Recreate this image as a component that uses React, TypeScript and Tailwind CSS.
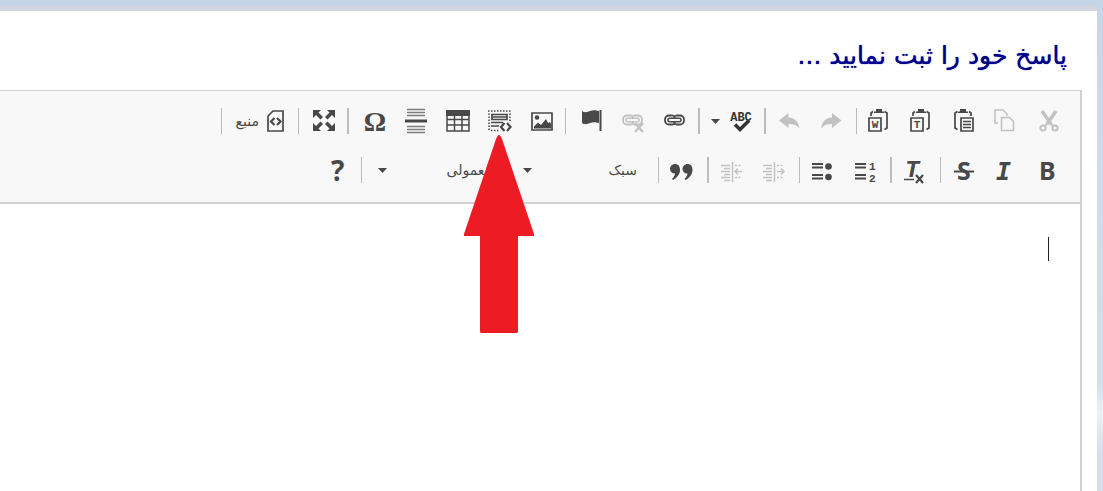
import type { ReactNode } from 'react'

type IconProps = {
    children: ReactNode
}

type ToolProps = {
    label: string
    disabled?: boolean
    children: ReactNode
}

function Icon({ children }: IconProps) {
    return (
        <svg
            width="24"
            height="24"
            viewBox="0 0 24 24"
            fill="none"
            stroke="#484848"
            strokeWidth="2"
            direction="ltr"
            className="shrink-0 overflow-visible"
            aria-hidden="true"
        >
            {children}
        </svg>
    )
}

function Tool({ label, disabled, children }: ToolProps) {
    return (
        <button
            type="button"
            title={label}
            aria-label={label}
            disabled={disabled}
            className={`flex h-12 w-[42px] shrink-0 items-center justify-center ${disabled ? 'opacity-30' : ''}`}
        >
            <Icon>{children}</Icon>
        </button>
    )
}

function Separator({ wide }: { wide?: boolean }) {
    return <span className={`mx-[3px] h-[26px] shrink-0 bg-[#bcbcbc] ${wide ? 'w-0.5' : 'w-px'}`} />
}

function Caret() {
    return (
        <svg width="9" height="5" viewBox="0 0 9 5" fill="#484848" className="shrink-0" aria-hidden="true">
            <path d="M0 0h9L4.500 5z" />
        </svg>
    )
}

function Combo({ label }: { label: string }) {
    return (
        <button
            type="button"
            aria-haspopup="listbox"
            className="flex h-12 w-[145px] shrink-0 items-center justify-between pr-[18px] pl-[13px] text-sm text-[#484848]"
        >
            <span>{label}</span>
            <Caret />
        </button>
    )
}

/* Clipboard with the page on the left (word / plain text) */
function PasteAs({ letter }: { letter: string }) {
    return (
        <>
            <path d="M5 4V2.500h2V0h6v2.500h2V4z" fill="#484848" stroke="none" />
            <path d="M2 7V4l2-1.500M15.500 2.500l2.500 1.500v15l-2.500 1.500" strokeWidth="1.700" />
            <path d="M0 9h12v13H0z" strokeWidth="1.700" />
            <text
                x="6"
                y="19"
                textAnchor="middle"
                fontSize="11"
                fontWeight="700"
                fontFamily="Liberation Mono, monospace"
                fill="#484848"
                stroke="none"
            >
                {letter}
            </text>
        </>
    )
}

function IndentLines() {
    return (
        <>
            <path d="M11.500 4v20" strokeWidth="1.500" />
            <path d="M0 7.500h9M3 10.500h6M0 13.500h9M3 16.500h6M0 19.500h9M3 22.500h6" strokeWidth="1.500" />
            <path d="M14 7.500h6M14 19.500h6" strokeWidth="1.500" strokeDasharray="2 1.500" />
        </>
    )
}

function ChainLinks() {
    return (
        <>
            <path d="M11 15.500H7a4 4 0 0 1-4-4v-1a4 4 0 0 1 4-4h4M14 6.500h4a4 4 0 0 1 4 4v1a4 4 0 0 1-4 4h-4" strokeWidth="1.800" />
            <path d="M11 6.500q2 .5 2 2.500M14 6.500q-2 .5-2 2.500M11 15.500q2-.5 2-2.500M14 15.500q-2-.5-2-2.500" strokeWidth="1.600" />
            <rect x="6" y="9.300" width="13" height="3.500" rx="1.500" strokeWidth="1.600" />
        </>
    )
}

export default function App() {
    return (
        <div
            dir="rtl"
            className="flex min-h-screen flex-col bg-linear-to-b from-[#c5d6e8] from-0% via-[#cddcec] via-30% to-[#d6dfea] to-100% font-['DejaVu_Sans','Noto_Sans',sans-serif]"
        >
            <div className="flex grow flex-col bg-[linear-gradient(to_bottom,transparent_78%,#eaf1f9_84%,#d6dfea_92%)] pt-1.5 pr-1.5">
                <main className="flex grow flex-col border-t-[5px] border-[#d2d5df] bg-white pr-[15px]">
                    <h1 className="pt-[27px] pr-[15px] pb-4 text-[25px] leading-9 font-medium text-[#00008b] text-shadow-[0_0_1px_#00008b]">
                        پاسخ خود را ثبت نمایید ...
                    </h1>

                    <section className="flex grow flex-col border-t border-r-2 border-[#d1d1d1]">
                        <div
                            role="toolbar"
                            className="flex flex-col gap-px border-b-2 border-[#d1d1d1] bg-[#f8f8f8] pt-1.5 pr-2.5 pb-2"
                        >
                            {/* First row */}
                            <div className="flex items-center">
                                <Tool label="برش" disabled>
                                    <path d="M5 2l9 13M19 2l-9 13" strokeWidth="3.500" />
                                    <circle cx="6" cy="19" r="2.600" />
                                    <circle cx="18" cy="19" r="2.600" />
                                    <path d="M8 17l4-4 4 4" />
                                </Tool>
                                <Tool label="کپی" disabled>
                                    <path d="M3 14H0V1h8l4 4v2" strokeWidth="1.500" />
                                    <path d="M6.500 8.500h8l4 4v9h-12z" strokeWidth="1.500" />
                                </Tool>
                                <Tool label="چسباندن">
                                    <path d="M5 4V2.500h2V0h6v2.500h2V4z" fill="#484848" stroke="none" />
                                    <path d="M4.500 2.500L2 4v15l2.500 1.500M16 2.500l2 1.500v3" strokeWidth="1.700" />
                                    <path d="M8 9h12v13H8z" strokeWidth="1.700" />
                                    <path d="M10 12.500h8M10 15.500h8M10 18.500h8" strokeWidth="1.500" />
                                </Tool>
                                <Tool label="چسباندن متن ساده">
                                    <PasteAs letter="T" />
                                </Tool>
                                <Tool label="چسباندن از Word">
                                    <PasteAs letter="W" />
                                </Tool>
                                <Separator />
                                <Tool label="بازچیدن" disabled>
                                    <path d="M21.500 11.500L12 4v4.500C5 9 2 13 1 19.500c3-3.500 6-4.500 11-4.500v4z" fill="#484848" stroke="none" />
                                </Tool>
                                <Tool label="واچیدن" disabled>
                                    <path d="M1 11.500L10.500 4v4.500c7 .5 10 4.500 11 11-3-3.500-6-4.500-11-4.500v4z" fill="#484848" stroke="none" />
                                </Tool>
                                <Separator wide />
                                <button
                                    type="button"
                                    aria-label="بررسی املا"
                                    className="flex h-12 w-[58px] shrink-0 items-center justify-between px-2"
                                >
                                    <Icon>
                                        <text
                                            x="12"
                                            y="12"
                                            textAnchor="middle"
                                            fontSize="12"
                                            fontWeight="700"
                                            fontFamily="Liberation Mono, monospace"
                                            fill="#333"
                                            stroke="none"
                                        >
                                            ABC
                                        </text>
                                        <path d="M6 15.500l5 5 9-9" stroke="#333" strokeWidth="3.500" />
                                    </Icon>
                                    <Caret />
                                </button>
                                <Separator wide />
                                <Tool label="پیوند">
                                    <ChainLinks />
                                </Tool>
                                <Tool label="برداشتن پیوند" disabled>
                                    <ChainLinks />
                                    <path d="M15 14l8 9M23 14l-8 9" strokeWidth="2.500" />
                                </Tool>
                                <Tool label="لنگر">
                                    <path d="M4 2c3 2 5 1 8 0s5-1 9 0v12c-3.500-1-6-1-9 0s-5 2-8 0z" fill="#484848" stroke="none" />
                                    <path d="M22.500 1v21" />
                                </Tool>
                                <Separator />
                                <Tool label="تصویر">
                                    <path d="M3 4h20v17H3z" strokeWidth="1.700" />
                                    <circle cx="8" cy="8.500" r="2.300" fill="#484848" stroke="none" />
                                    <path d="M5 19.500v-2l4-4 3 2.500 5-6 2 4 2-1 1 2v4.500z" fill="#484848" stroke="none" />
                                </Tool>
                                <div className="relative shrink-0">
                                    <Tool label="قاب کد">
                                        <path d="M1 2h23M2 4.500v18M23 4.500V13M4 21.500h9" strokeDasharray="1.500 1.500" strokeWidth="1.500" />
                                        <path d="M5 5.500h15v5H5zM5 8h15M4 13.500h12M4 17h8" strokeWidth="1.700" />
                                        <path d="M17.500 14l-3.500 4 3.500 4M20 14l3.500 4-3.500 4" strokeWidth="2.200" />
                                    </Tool>
                                    {/* Pointer to the embed button */}
                                    <svg
                                        width="70"
                                        height="198"
                                        viewBox="0 0 70 198"
                                        fill="#ed1c24"
                                        className="pointer-events-none absolute top-[38px] left-1/2 z-10 -translate-x-1/2"
                                        aria-hidden="true"
                                    >
                                        <path d="M33.500 1Q35 -1 36.500 1L38 4L70 99v2H54v96l-1 1H17l-1-1v-96H0v-2L32 4z" />
                                    </svg>
                                </div>
                                <Tool label="جدول">
                                    <path d="M2 2h22v20H2zM9.500 6v16M17 6v16M2 10.500h22M2 16h22" strokeWidth="1.500" />
                                    <path d="M1 1h24v6H1z" fill="#484848" stroke="none" />
                                </Tool>
                                <Tool label="خط افقی">
                                    <path d="M2 12h22" strokeWidth="3" />
                                    <path d="M4 .5h18M4 3.500h18M4 6.500h18M4 17.500h18M4 20.500h18M4 23.500h18" strokeWidth="1.500" opacity=".7" />
                                </Tool>
                                <Tool label="نویسه ویژه">
                                    <text
                                        x="14"
                                        y="22"
                                        textAnchor="middle"
                                        fontSize="28"
                                        fontWeight="700"
                                        fontFamily="Liberation Serif, serif"
                                        fill="#484848"
                                        stroke="none"
                                    >
                                        Ω
                                    </text>
                                </Tool>
                                <Separator wide />
                                <Tool label="بیشینه کردن">
                                    <path
                                        d="M2 1h8L7.500 3.500 12 8l-2.500 2.500L5 6 2 9zM24 1v8l-3-3-4.500 4.500L14 8l4.500-4.500L16 1zM2 22v-8l3 3 4.500-4.500L12 15l-4.500 4.500L10 22zM24 22h-8l2.500-2.500L14 15l2.500-2.500L21 17l3-3z"
                                        fill="#484848"
                                        stroke="none"
                                    />
                                </Tool>
                                <Separator />
                                <button
                                    type="button"
                                    className="flex h-12 w-[70px] shrink-0 items-center gap-1 px-2 text-sm text-[#484848]"
                                >
                                    <Icon>
                                        <path d="M5 7l5-5h10v20H5z" strokeWidth="1.700" />
                                        <path d="M11.500 9L8 12.500l3.500 3.500M14 9l3.500 3.500L14 16" strokeWidth="2.200" />
                                    </Icon>
                                    <span>منبع</span>
                                </button>
                                <Separator />
                            </div>

                            {/* Second row */}
                            <div className="flex items-center">
                                <Tool label="درشت">
                                    <text x="2" y="22" fontSize="25" fontWeight="700" fontFamily="Noto Sans, sans-serif" fill="#484848" stroke="none">
                                        B
                                    </text>
                                </Tool>
                                <Tool label="خمیده">
                                    <text
                                        x="1"
                                        y="22"
                                        fontSize="25"
                                        fontWeight="700"
                                        fontStyle="italic"
                                        fontFamily="DejaVu Sans Mono, monospace"
                                        fill="#484848"
                                        stroke="none"
                                    >
                                        I
                                    </text>
                                </Tool>
                                <Tool label="خط‌خورده">
                                    <text x="4" y="22" fontSize="25" fontWeight="700" fontFamily="Noto Sans, sans-serif" fill="#484848" stroke="none">
                                        S
                                    </text>
                                    <path d="M1 13.500h20" />
                                </Tool>
                                <Separator />
                                <Tool label="برداشتن قالب">
                                    <text
                                        x="1"
                                        y="19"
                                        fontSize="24"
                                        fontWeight="700"
                                        fontStyle="italic"
                                        fontFamily="Liberation Mono, monospace"
                                        fill="#484848"
                                        stroke="none"
                                    >
                                        T
                                    </text>
                                    <path d="M0 21.500h10" strokeWidth="1.500" />
                                    <path d="M12 17l7 8M19 17l-7 8" strokeWidth="2.200" />
                                </Tool>
                                <Separator wide />
                                <Tool label="فهرست شماره‌دار">
                                    <path d="M1 6h11M1 9.500h11M1 17h11M1 20.500h11" strokeWidth="1.800" />
                                    <g fontSize="11" fontWeight="700" fontFamily="Liberation Mono, monospace" fill="#484848" stroke="none">
                                        <text x="15" y="12">1</text>
                                        <text x="15" y="24">2</text>
                                    </g>
                                </Tool>
                                <Tool label="فهرست نقطه‌ای">
                                    <path d="M0 6h11M0 9.500h11M0 17h11M0 20.500h11" strokeWidth="1.800" />
                                    <circle cx="16.500" cy="8.500" r="3.300" fill="#484848" stroke="none" />
                                    <circle cx="16.500" cy="19" r="3.300" fill="#484848" stroke="none" />
                                </Tool>
                                <Separator />
                                <Tool label="افزایش تورفتگی" disabled>
                                    <IndentLines />
                                    <path d="M14 13.500h7M18 10.500l3 3-3 3" strokeWidth="1.500" />
                                </Tool>
                                <Tool label="کاهش تورفتگی" disabled>
                                    <IndentLines />
                                    <path d="M21 13.500h-7M17 10.500l-3 3 3 3" strokeWidth="1.500" />
                                </Tool>
                                <Separator wide />
                                <Tool label="نقل قول">
                                    <path
                                        d="M4 6c3 0 5 2 5 6s-3 8-7 10l-1-1c2-2 3-4 3-5.500C1 15.500-1 13.500-1 11s2-5 5-5zM16.500 6c3 0 5 2 5 6s-3 8-7 10l-1-1c2-2 3-4 3-5.500-3 0-5-2-5-4.500s2-5 5-5z"
                                        fill="#484848"
                                        stroke="none"
                                    />
                                </Tool>
                                <Separator />
                                <Combo label="سبک" />
                                <Combo label="معمولی" />
                                <Separator />
                                <Tool label="راهنما">
                                    <text x="6" y="23" fontSize="28" fontWeight="700" fontFamily="Noto Sans, sans-serif" fill="#484848" stroke="none">
                                        ?
                                    </text>
                                </Tool>
                            </div>
                        </div>

                        {/* Writing area */}
                        <div className="relative flex grow">
                            <textarea
                                aria-label="متن پاسخ"
                                className="min-h-60 grow resize-none bg-white px-[31px] py-[33px] text-base outline-none"
                            />
                            <span className="absolute top-[33px] right-[31px] h-6 w-px bg-[#202124]" />
                        </div>
                    </section>
                </main>
            </div>
        </div>
    )
}
